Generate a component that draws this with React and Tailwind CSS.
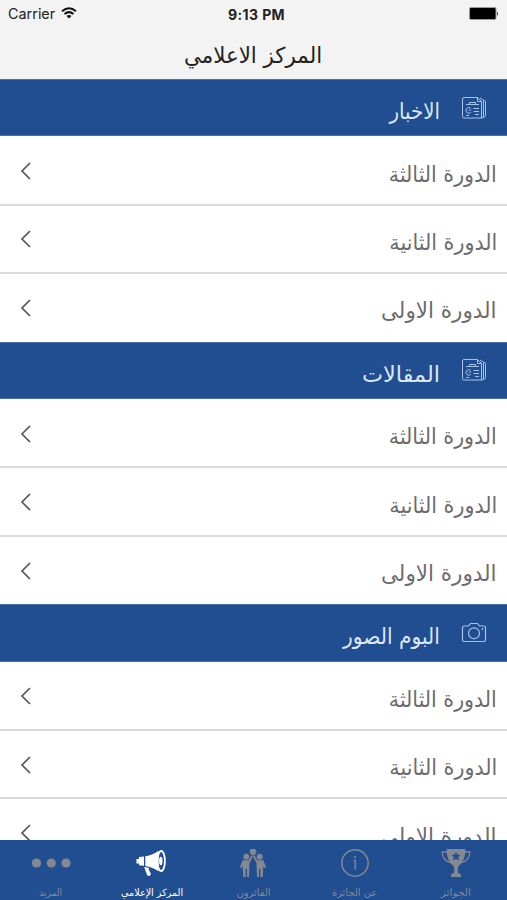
const sections = [
  { title: "الاخبار", icon: NewsIcon, titleClass: "scale-x-100" },
  { title: "المقالات", icon: NewsIcon, titleClass: "scale-x-[1.13]" },
  { title: "البوم الصور", icon: CameraIcon, titleClass: "scale-x-[1.02]" },
];

const rounds = [
  { label: "الدورة الثالثة", labelClass: "scale-x-[1.04]" },
  { label: "الدورة الثانية", labelClass: "scale-x-[1.045]" },
  { label: "الدورة الاولى", labelClass: "scale-x-[1.085]" },
];

const tabs = [
  { label: "الجوائز", icon: TrophyIcon, labelClass: "scale-x-[1.18]" },
  { label: "عن الجائزة", icon: InfoIcon, labelClass: "scale-x-[1.1]" },
  { label: "الفائزون", icon: WinnersIcon, labelClass: "scale-x-[1.1]" },
  { label: "المركز الإعلامي", icon: MegaphoneIcon, active: true, labelClass: "scale-x-[1.07]" },
  { label: "المزيد", icon: MoreIcon, labelClass: "scale-x-100" },
];

function NewsIcon() {
  return (
    <svg viewBox="0 0 26 24" className="h-6 w-[26px]" fill="none" stroke="currentColor" strokeWidth="1" strokeLinejoin="round">
      <path d="M1.500 3Q1.500 1.500 3 1.500h13.500L20.500 5.500v16.500H3q-1.500 0-1.500-1.500Z" />
      <path d="M16.500 1.500v4h4M19 2l3.500 2v17q0 1-2 1M22.500 4.500h1q1 0 1 1v14q0 1.500-2 2" />
      <path d="M5 8.500h3.500m6 0H18M8.500 8.500v-2h6v2z" />
      <path d="M9.500 12.200a2.800 2.800 0 1 0 .6 3.800M7.500 14H10M12.500 12.500H18M12.500 15.500H18M14 18.500h4M5 19.500h3" />
    </svg>
  );
}

function CameraIcon() {
  return (
    <svg viewBox="0 0 26 22" className="h-[22px] w-[26px]" fill="none" stroke="currentColor" strokeWidth="1.2" strokeLinejoin="round">
      <path d="M3 4H7.500L9.500 1.500h7L18.500 4H23q1.500 0 1.500 1.500v12.500q0 1.500-1.500 1.500H3q-1.500 0-1.500-1.500V5.500Q1.500 4 3 4Z" />
      <circle cx="13" cy="11.300" r="5.500" />
      <circle cx="21.500" cy="7" r="0.900" fill="currentColor" stroke="none" />
    </svg>
  );
}

function TrophyIcon() {
  return (
    <svg viewBox="0 0 30 28" className="h-7 w-[30px]" fill="currentColor">
      <path d="M5.500 0h19q-.3 12.500-6.500 16.500-1.200 1-1.200 4v3.500q3.200.3 3.200 2.500V28H10v-1.500q0-2.200 3.200-2.500v-3.500q0-3-1.200-4Q5.800 12.500 5.500 0Z" />
      <path d="M6.500 3H1.200q0 8.500 8.300 10.500M23.500 3h5.300q0 8.500-8.300 10.500" fill="none" stroke="currentColor" strokeWidth="1.300" />
      <path d="m15 2.800 1.300 3 3.300.3-2.500 2.100.8 3.200-2.900-1.700-2.900 1.700.8-3.200-2.500-2.100 3.300-.3Z" fill="#214d91" />
    </svg>
  );
}

function InfoIcon() {
  return (
    <svg viewBox="0 0 28 28" className="size-7" fill="none" stroke="currentColor" strokeWidth="1.500">
      <circle cx="14" cy="14" r="13.200" />
      <path d="M12.500 11.500H14.300V20.500" />
      <circle cx="14" cy="8" r="1.100" fill="currentColor" stroke="none" />
    </svg>
  );
}

function WinnersIcon() {
  return (
    <svg viewBox="0 0 28 30" className="h-[30px] w-7" fill="currentColor">
      <path d="M11.800 1h4.400l1.500 2.600-2.200 3.600h-3L10.300 3.600Z" />
      <circle cx="7.300" cy="8.800" r="3" />
      <circle cx="20.700" cy="8.800" r="3" />
      <path d="M3.600 12.300h6.200l2.700-5 1.400.9-3.400 7-.5 13.800H8v-8H6.700v8H4.200l-.5-10.500-1 .2L2.500 20 .8 19.500Z" />
      <path d="M24.400 12.300h-6.200l-2.700-5-1.400.9 3.400 7 .5 13.800h2v-8h1.300v8h2.500l.5-10.500 1 .2.200 1.300 1.700-.5Z" />
    </svg>
  );
}

function MegaphoneIcon() {
  return (
    <svg viewBox="0 0 30 26" className="ml-[-2px] h-[26px] w-[30px]" fill="currentColor">
      <path d="M8 6.500v9.200l-5-.5v-1.700H.5V9H3V7Z" />
      <path d="M9.300 6.300Q17 5 22.500.8v20.400Q17 17 9.300 15.900Z" />
      <path d="M8.200 17l4.500.7.300 2.500 1.800 3.300q.3 2-2.500 2.500-1.200-.3-1.600-2Z" />
      <ellipse cx="25.200" cy="11" rx="3.700" ry="10" fill="none" stroke="currentColor" strokeWidth="1.800" />
      <ellipse cx="24.800" cy="11" rx="1.700" ry="4.200" />
    </svg>
  );
}

function MoreIcon() {
  return (
    <svg viewBox="0 0 40 10" className="h-2.5 w-10" fill="currentColor">
      <circle cx="5.500" cy="5" r="4.600" />
      <circle cx="20.300" cy="5" r="4.600" />
      <circle cx="35" cy="5" r="4.600" />
    </svg>
  );
}

function StatusBar() {
  return (
    <div dir="ltr" className="grid h-7 grid-cols-3 items-center px-2 font-['Inter',sans-serif] text-[#222]">
      <div className="flex items-center gap-1.5">
        <span className="text-[14.400px] leading-5">Carrier</span>
        <svg viewBox="0 0 16 12" className="-mt-0.5 h-3 w-4" fill="none" stroke="#111" strokeWidth="2">
          <path d="M1 4.200q7-6 14 0M3.500 7q4.500-3.800 9 0" />
          <path d="M8 11.500 5.500 9q2.500-2 5 0Z" fill="#111" stroke="none" />
        </svg>
      </div>
      <span className="ml-1.5 text-center text-[14px] font-bold tracking-[0.03em] whitespace-nowrap">9:13 PM</span>
      <svg viewBox="0 0 30 13" className="-mt-0.5 h-[13px] w-[30px] justify-self-end">
        <rect x="0.500" y="0.500" width="26.500" height="12" rx="1.500" fill="#000" stroke="#999" />
        <path d="M28 4q1.700 2.500 0 5Z" fill="#111" />
      </svg>
    </div>
  );
}

function Section({ section }) {
  const Icon = section.icon;

  return (
    <section>
      <div className="flex h-[57.300px] items-center border-y border-[#4a70aa] bg-[#214d91] pr-5 text-[#dce8f8]">
        <span className="text-[#a9c3e8]">
          <Icon />
        </span>
        <h2 className={`mt-2 mr-[21px] origin-right text-[22px] ${section.titleClass}`}>{section.title}</h2>
      </div>
      {rounds.map((round) => (
        <div key={round.label} className="group h-[68.450px]">
          <div className="flex h-[69.500px] items-center justify-between border-b-2 border-[#dadada] pr-2.5 pl-5 group-last:border-transparent">
            <span className={`mt-2 origin-right text-[22px] text-[#6c6c6c] ${round.labelClass}`}>{round.label}</span>
            <svg viewBox="0 0 12 18" className="mt-0.5 h-[18px] w-3" fill="none" stroke="#555" strokeWidth="1.700">
              <path d="M10 1 2 9l8 8" />
            </svg>
          </div>
        </div>
      ))}
    </section>
  );
}

export default function App() {
  return (
    <div dir="rtl" className="flex h-[900px] w-[507px] flex-col overflow-hidden bg-white font-['DejaVu_Sans_Condensed','DejaVu_Sans',sans-serif]">
      <header className="h-[79px] shrink-0 bg-[#f3f3f3]">
        <StatusBar />
        <h1 className="mt-3 text-center text-[22px] leading-8 text-[#222]">
          <span className="inline-block scale-x-[1.08]">المركز الاعلامي</span>
        </h1>
      </header>
      <main className="min-h-0 flex-1 overflow-hidden">
        {sections.map((section) => (
          <Section key={section.title} section={section} />
        ))}
      </main>
      <nav className="flex h-[60px] shrink-0 bg-[#214d91]">
        {tabs.map((tab) => {
          const Icon = tab.icon;
          return (
            <div
              key={tab.label}
              className={`flex flex-1 flex-col items-center ${tab.active ? "text-white" : "text-[#848991]"}`}
            >
              <div className="flex h-[47px] items-center pb-px">
                <Icon />
              </div>
              <span className={`text-[10px] leading-3 whitespace-nowrap ${tab.labelClass}`}>{tab.label}</span>
            </div>
          );
        })}
      </nav>
    </div>
  );
}
